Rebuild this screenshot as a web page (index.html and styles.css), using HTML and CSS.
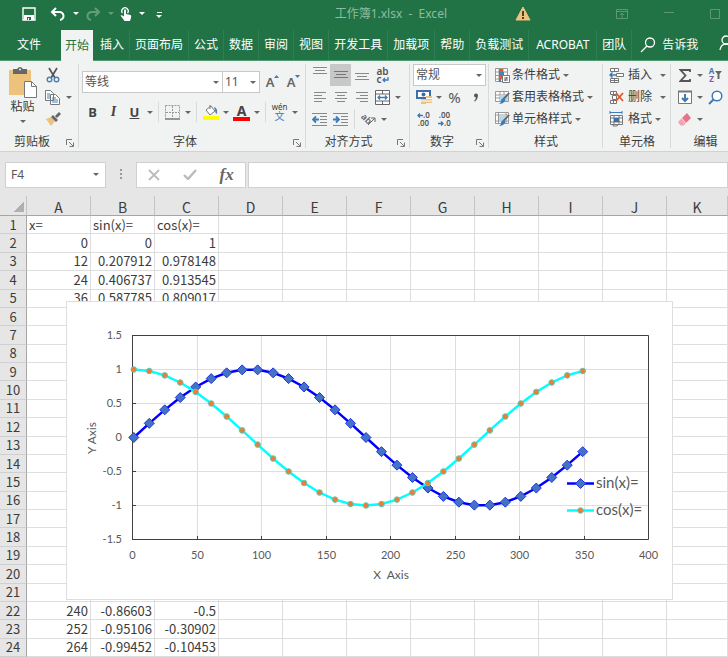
FILE: index.html
```html
<!DOCTYPE html>
<html lang="zh-CN">
<head>
    <meta charset="UTF-8">
    <meta name="viewport" content="width=device-width, initial-scale=1.0">
    <title>工作簿1.xlsx - Excel</title>
    <link rel="stylesheet" href="styles.css">
</head>
<body>
    <header class="titlebar">
        <div class="quick">
            <button class="save" aria-label="保存"><svg width="14" height="14" viewBox="0 0 14 14"><path d="M1 1h12v12H1z" fill="none" stroke="#fff" stroke-width="1.4"/><path d="M2 8h10v5H2z" fill="#fff"/><path d="M5 10h4v3H5z" fill="#217346"/><path d="M6 11h1v2H6z" fill="#fff"/></svg></button>
            <button aria-label="撤消"><svg width="16" height="14" viewBox="0 0 16 14"><path d="M2 5h7a4 4 0 0 1 1 8M6 1L2 5l4 4" fill="none" stroke="#fff" stroke-width="2"/></svg></button>
            <button class="drop" aria-label="撤消列表"><span class="caret"></span></button>
            <button class="faded" aria-label="恢复"><svg width="16" height="14" viewBox="0 0 16 14"><path d="M14 5H7a4 4 0 0 0-1 8M10 1l4 4-4 4" fill="none" stroke="#fff" stroke-width="2"/></svg></button>
            <button class="drop faded" aria-label="恢复列表"><span class="caret"></span></button>
            <button class="touch" aria-label="触摸/鼠标模式"><svg width="12" height="15" viewBox="0 0 12 15"><path d="M2.500 7a3.200 3.200 0 1 1 5 0" fill="none" stroke="#fff" stroke-width="1.300"/><path d="M4 4q1-1.500 2 0v4l4.500 1q1 .5.7 2L10 15H4.500L.5 9.500q1-1 3.500 1z" fill="#fff"/></svg></button>
            <button class="drop" aria-label="模式列表"><span class="caret"></span></button>
            <button class="more" aria-label="自定义快速访问工具栏"><span class="caret"></span></button>
        </div>
        <div class="doc-title">工作簿1.xlsx&nbsp; -&nbsp; Excel</div>
        <svg class="warn" width="16" height="15" viewBox="0 0 16 15"><path d="M8 1l7 13H1z" fill="#f0c27b" stroke="#f0c27b" stroke-linejoin="round"/><path d="M7 5h2v5H7zM7 11h2v2H7z" fill="#4a4030"/></svg>
        <div class="window-buttons">
            <button aria-label="功能区显示选项"><svg width="12" height="10" viewBox="0 0 12 10"><path d="M.5.500h11v9H.5zM.5 2.500h11M6 9V4M4 6l2-2 2 2" fill="none" stroke="#5c9877"/></svg></button>
            <button aria-label="最小化"><svg width="10" height="10" viewBox="0 0 10 10"><path d="M0 3.500h10" stroke="#5c9877"/></svg></button>
            <button aria-label="最大化"><svg width="10" height="10" viewBox="0 0 10 10"><path d="M.5.500h9v9h-9z" fill="none" stroke="#5c9877"/></svg></button>
        </div>
    </header>

    <nav class="tabs">
        <button class="file">文件</button>
        <button class="active">开始</button>
        <button>插入</button>
        <button>页面布局</button>
        <button>公式</button>
        <button>数据</button>
        <button>审阅</button>
        <button>视图</button>
        <button>开发工具</button>
        <button>加载项</button>
        <button>帮助</button>
        <button>负载测试</button>
        <button class="acrobat">ACROBAT</button>
        <button>团队</button>
        <button class="tell-me"><svg width="16" height="16" viewBox="0 0 16 16"><circle cx="10" cy="5.500" r="4.500"/><path d="M7 9l-6 6"/></svg>告诉我</button>
        <button class="share" aria-label="共享"><svg width="14" height="16" viewBox="0 0 14 16"><circle cx="7" cy="5" r="4"/><path d="M1 15q1-6 6-6t6 6"/></svg></button>
    </nav>

    <section class="ribbon">
        <div class="group clipboard">
            <div class="body">
                <button class="paste">
                    <svg width="30" height="32" viewBox="0 0 30 32"><path d="M1 3h22v25H1z" fill="#ecc27c"/><path d="M5 2h4q3-4 6 0h4v5H5z" fill="#666"/><circle cx="12" cy="2.500" r="1" fill="#f1f3f2"/><path d="M16.500 14.500h7l5 5v11h-12z" fill="#fff" stroke="#777"/><path d="M23.500 14.500v5h5" fill="none" stroke="#777"/></svg>
                    粘贴
                    <span class="caret"></span>
                </button>
                <div class="rows">
                    <div class="row"><button class="tool" aria-label="剪切"><svg width="14" height="16" viewBox="0 0 14 16"><path d="M3 1l6 10M11 1L5 11" stroke="#555" stroke-width="1.700"/><circle cx="3.500" cy="12.500" r="2.300" fill="none" stroke="#4a7fb8" stroke-width="1.400"/><circle cx="10.500" cy="12.500" r="2.300" fill="none" stroke="#4a7fb8" stroke-width="1.400"/></svg></button></div>
                    <div class="row"><button class="tool" aria-label="复制"><svg width="15" height="15" viewBox="0 0 15 15"><path d="M.5.500h5l3 3v7h-8zM5.500 4.500h5l4 4v6h-9z" fill="#fff" stroke="#777"/><path d="M2 4h3M2 6h3M2 8h3M7 8h4M7 10h6M7 12h6" stroke="#4a7fb8"/></svg></button><button class="drop" aria-label="复制选项"><span class="caret"></span></button></div>
                    <div class="row"><button class="tool" aria-label="格式刷"><svg width="16" height="14" viewBox="0 0 16 14"><path d="M1 7l5-2 4 4-4 5z" fill="#ecc27c"/><path d="M6 5l2-2 5 5-2 2zM10 4l4-4 2 2-4 4z" fill="#666"/></svg></button></div>
                </div>
            </div>
            <div class="name">剪贴板<svg class="launch" width="8" height="8" viewBox="0 0 8 8"><path d="M.5 6V.500H6M3 3l4 4M7.500 3.500v4h-4" fill="none" stroke="#777"/></svg></div>
        </div>

        <div class="group font">
            <div class="body rows">
                <div class="row">
                    <label class="pick family"><select aria-label="字体"><option>等线</option></select><span class="caret"></span></label>
                    <label class="pick size"><select aria-label="字号"><option>11</option></select><span class="caret"></span></label>
                    <button class="tool grow" aria-label="增大字号">A<svg width="5" height="3" viewBox="0 0 5 3"><path d="M0 3l2.500-3L5 3z" fill="#3d7ab8"/></svg></button>
                    <button class="tool shrink" aria-label="减小字号">A<svg width="5" height="3" viewBox="0 0 5 3"><path d="M0 0l2.500 3L5 0z" fill="#3d7ab8"/></svg></button>
                </div>
                <div class="row">
                    <button class="tool bold">B</button>
                    <button class="tool italic">I</button>
                    <button class="tool underline">U</button>
                    <button class="drop" aria-label="下划线选项"><span class="caret"></span></button>
                    <span class="sep"></span>
                    <button class="tool" aria-label="边框"><svg width="15" height="15" viewBox="0 0 15 15"><path d="M.5.500h14v13M.5.500v13M7.500 1v13M1 7.500h13" fill="none" stroke="#999" stroke-dasharray="2 1"/><path d="M0 14h15" stroke="#777" stroke-width="1.500"/></svg></button>
                    <button class="drop" aria-label="边框选项"><span class="caret"></span></button>
                    <span class="sep"></span>
                    <button class="tool" aria-label="填充颜色"><svg width="16" height="16" viewBox="0 0 16 16"><path d="M3 6l5-4 4 5-5 4z" fill="#fff" stroke="#777"/><path d="M7 5V1" stroke="#777"/><path d="M11 3q4 1 3 7-2-1-2-4z" fill="#4a7fb8"/><path d="M0 12h16v4H0z" fill="#ff0"/></svg></button>
                    <button class="drop" aria-label="填充颜色选项"><span class="caret"></span></button>
                    <button class="tool color">A</button>
                    <button class="drop" aria-label="字体颜色选项"><span class="caret"></span></button>
                    <span class="sep"></span>
                    <button class="tool pinyin"><span>wén</span><span class="han">文</span></button>
                    <button class="drop" aria-label="拼音选项"><span class="caret"></span></button>
                </div>
            </div>
            <div class="name">字体<svg class="launch" width="8" height="8" viewBox="0 0 8 8"><path d="M.5 6V.500H6M3 3l4 4M7.500 3.500v4h-4" fill="none" stroke="#777"/></svg></div>
        </div>

        <div class="group align">
            <div class="body rows">
                <div class="row">
                    <button class="tool" aria-label="顶端对齐"><svg width="14" height="16" viewBox="0 0 14 16"><path d="M0 .500h14M2 3.500h10M0 6.500h14" stroke="#888"/></svg></button>
                    <button class="tool pressed" aria-label="垂直居中"><svg width="14" height="16" viewBox="0 0 14 16"><path d="M0 4.500h14M2 7.500h10M0 10.500h14" stroke="#777"/></svg></button>
                    <button class="tool" aria-label="底端对齐"><svg width="14" height="16" viewBox="0 0 14 16"><path d="M0 6.500h14M2 9.500h10M0 12.500h14" stroke="#888"/></svg></button>
                    <button class="tool wrap"><span>ab</span><span>c<svg width="7" height="6" viewBox="0 0 7 6"><path d="M6 0v3H1M3 1L1 3l2 2" fill="none" stroke="#3d7ab8" stroke-width="1.300"/></svg></span></button>
                </div>
                <div class="row">
                    <button class="tool" aria-label="左对齐"><svg width="12" height="10" viewBox="0 0 12 10"><path d="M0 .500h12M0 3.500h8M0 6.500h12M0 9.500h8" stroke="#888"/></svg></button>
                    <button class="tool" aria-label="居中"><svg width="12" height="10" viewBox="0 0 12 10"><path d="M0 .500h12M2 3.500h8M0 6.500h12M2 9.500h8" stroke="#888"/></svg></button>
                    <button class="tool" aria-label="右对齐"><svg width="12" height="10" viewBox="0 0 12 10"><path d="M0 .500h12M4 3.500h8M0 6.500h12M4 9.500h8" stroke="#888"/></svg></button>
                    <button class="tool" aria-label="合并后居中"><svg width="15" height="15" viewBox="0 0 15 15"><path d="M.5.500h14v14H.5zM.5 4h14M.5 11h14M7.500 0v4M7.500 11v4" fill="#fff" stroke="#666"/><path d="M3 7.500h9M5 5.500l-2 2 2 2M10 5.500l2 2-2 2" fill="none" stroke="#3d7ab8" stroke-width="1.300"/></svg></button>
                    <button class="drop" aria-label="合并选项"><span class="caret"></span></button>
                </div>
                <div class="row">
                    <button class="tool" aria-label="减少缩进量"><svg width="15" height="13" viewBox="0 0 15 13"><path d="M0 .500h15M8 3.500h7M8 6.500h7M8 9.500h7M0 12.500h15" stroke="#888"/><path d="M7 6.500H1M4 3.500l-3 3 3 3" fill="none" stroke="#3d7ab8" stroke-width="1.800"/></svg></button>
                    <button class="tool" aria-label="增加缩进量"><svg width="15" height="13" viewBox="0 0 15 13"><path d="M0 .500h15M8 3.500h7M8 6.500h7M8 9.500h7M0 12.500h15" stroke="#888"/><path d="M0 6.500h6M3 3.500l3 3-3 3" fill="none" stroke="#3d7ab8" stroke-width="1.800"/></svg></button>
                    <span class="sep"></span>
                    <button class="tool orient"><span>ab</span><svg width="8" height="8" viewBox="0 0 8 8"><path d="M0 8l7-7M3 1h4v4" fill="none" stroke="#666"/></svg></button>
                    <button class="drop" aria-label="方向选项"><span class="caret"></span></button>
                </div>
            </div>
            <div class="name">对齐方式<svg class="launch" width="8" height="8" viewBox="0 0 8 8"><path d="M.5 6V.500H6M3 3l4 4M7.500 3.500v4h-4" fill="none" stroke="#777"/></svg></div>
        </div>

        <div class="group number">
            <div class="body rows">
                <div class="row"><label class="pick format"><select aria-label="数字格式"><option>常规</option></select><span class="caret"></span></label></div>
                <div class="row">
                    <button class="tool" aria-label="会计数字格式"><svg width="16" height="16" viewBox="0 0 16 16"><path d="M1 2h13v7H1z" fill="#fff" stroke="#3d6ea8" stroke-width="2"/><circle cx="7.500" cy="5.500" r="2" fill="#3d6ea8"/><path d="M5 10h5v5H5zM10 7h6v7h-6z" fill="#ecc27c"/><path d="M5 12h5M10 9.500h6M10 12h6" stroke="#fff"/></svg></button>
                    <button class="drop" aria-label="货币选项"><span class="caret"></span></button>
                    <button class="tool percent">%</button>
                    <button class="tool" aria-label="千位分隔样式"><svg width="6" height="9" viewBox="0 0 6 9"><path d="M1 2.500a2 2 0 1 1 4 0Q5 6 2 8.500L1 8q2-2 2-3.500-2 0-2-2z" fill="#555"/></svg></button>
                </div>
                <div class="row">
                    <button class="tool decimals"><span><svg width="6" height="5" viewBox="0 0 6 5"><path d="M6 2.500H1M3 .500l-2 2 2 2" fill="none" stroke="#3d7ab8" stroke-width="1.400"/></svg>.0</span><span>.00</span></button>
                    <button class="tool decimals"><span>.00</span><span><svg width="6" height="5" viewBox="0 0 6 5"><path d="M0 2.500h5M3 .500l2 2-2 2" fill="none" stroke="#3d7ab8" stroke-width="1.400"/></svg>.0</span></button>
                </div>
            </div>
            <div class="name">数字<svg class="launch" width="8" height="8" viewBox="0 0 8 8"><path d="M.5 6V.500H6M3 3l4 4M7.500 3.500v4h-4" fill="none" stroke="#777"/></svg></div>
        </div>

        <div class="group styles">
            <div class="body rows">
                <button class="row text"><span class="tool"><svg width="15" height="15" viewBox="0 0 15 15"><path d="M.5.500h12v13H.5zM.5 4h12M.5 7.500h12M.5 11h12M4 .500v13M8 .500v13" fill="#fff" stroke="#999"/><path d="M4 1h4v3H4zM4 8h3v3H4z" fill="#e2562c"/><path d="M4 4h5v4H4zM4 11h2v3H4z" fill="#4a7fb8"/><path d="M7.500 7.500h7v7h-7z" fill="#fff" stroke="#777"/><path d="M9 10h4M9 12h4M12 9l-2 4" stroke="#666"/></svg></span>条件格式<span class="caret"></span></button>
                <button class="row text"><span class="tool"><svg width="15" height="15" viewBox="0 0 15 15"><path d="M.5 1.500h13v10H.5zM.5 5h13M.5 8h13M5 1v10M9 1v10" fill="#fff" stroke="#999"/><path d="M5 5h8v6H5z" fill="#b9d7e6"/><path d="M15 3l-5 6-2-1 5-5z" fill="#666"/><path d="M8 8q3 0 2 3-2 3-6 3 2-1 2-3 0-2 2-3z" fill="#3d7ab8"/></svg></span>套用表格格式<span class="caret"></span></button>
                <button class="row text"><span class="tool"><svg width="15" height="15" viewBox="0 0 15 15"><path d="M.5.500h13v11H.5zM.5 3h13M.5 9h13M3.500 0v11M11 0v11" fill="#fff" stroke="#999"/><path d="M4 3h7v6H4z" fill="#b9d7e6"/><path d="M15 3l-5 6-2-1 5-5z" fill="#666"/><path d="M8 8q3 0 2 3-2 3-6 3 2-1 2-3 0-2 2-3z" fill="#3d7ab8"/></svg></span>单元格样式<span class="caret"></span></button>
            </div>
            <div class="name">样式</div>
        </div>

        <div class="group cells">
            <div class="body rows">
                <button class="row text"><span class="tool"><svg width="15" height="15" viewBox="0 0 15 15"><path d="M1.500.500h8v3h-8zM5.500.500v3M1.500 10.500h8v4h-8zM1.500 12.500h8M5.500 10.500v4M7.500 5.500h7v3h-7z" fill="#fff" stroke="#777"/><path d="M7 7H1M3.500 4.500L1 7l2.500 2.500" fill="none" stroke="#3d7ab8" stroke-width="1.500"/></svg></span>插入<span class="caret"></span></button>
                <button class="row text"><span class="tool"><svg width="15" height="15" viewBox="0 0 15 15"><path d="M1.500 1.500h6v3h-6zM4.500 1.500v3M1.500 10.500h6v3h-6zM4.500 10.500v3M3.500 5.500h4v4h-4z" fill="#fff" stroke="#777"/><path d="M7 3l7 8M14 3l-7 8" stroke="#e2562c" stroke-width="1.800"/></svg></span>删除<span class="caret"></span></button>
                <button class="row text tight"><span class="tool"><svg width="15" height="16" viewBox="0 0 15 16"><path d="M1 1.500h12M1 0v3M13 0v3" stroke="#3d7ab8"/><path d="M1.500 4.500h12v9h-12zM1.500 7h12M1.500 11h12M5 4.500v9M10 4.500v9" fill="#fff" stroke="#777"/><path d="M5 7h5v4H5z" fill="#3d6ea8"/><path d="M4 13v2h4l2-2" fill="none" stroke="#777"/></svg></span>格式<span class="caret"></span></button>
            </div>
            <div class="name">单元格</div>
        </div>

        <div class="group editing">
            <div class="body rows">
                <div class="row">
                    <button class="tool" aria-label="自动求和"><svg width="12" height="13" viewBox="0 0 12 13"><path d="M11 3V1H1.500l5 5.500-5 5.500H11v-2" fill="none" stroke="#555" stroke-width="1.800"/></svg></button>
                    <button class="drop" aria-label="求和选项"><span class="caret"></span></button>
                    <button class="tool sort"><span class="az"><span>A</span><span class="z">Z</span></span><svg width="7" height="8" viewBox="0 0 7 8"><path d="M0 0h7L4.500 3v5h-2V3z" fill="#666"/></svg></button>
                </div>
                <div class="row">
                    <button class="tool" aria-label="填充"><svg width="14" height="14" viewBox="0 0 14 14"><path d="M.5 1.500h13v12H.5z" fill="#fff" stroke="#777"/><path d="M0 1.500h14" stroke="#777" stroke-width="2"/><path d="M7 4v7M4 8l3 3 3-3" fill="none" stroke="#3d7ab8" stroke-width="2"/></svg></button>
                    <button class="drop" aria-label="填充选项"><span class="caret"></span></button>
                    <button class="tool" aria-label="查找和选择"><svg width="15" height="15" viewBox="0 0 15 15"><circle cx="9" cy="6" r="4.800" fill="#fff" stroke="#3d7ab8" stroke-width="1.500"/><path d="M5.500 9.500L1 14" stroke="#3d7ab8" stroke-width="2"/></svg></button>
                </div>
                <div class="row">
                    <button class="tool" aria-label="清除"><svg width="13" height="13" viewBox="0 0 13 13"><path d="M4 5l5-5 4 5-5 5z" fill="#e8748a"/><path d="M3.500 5.500l4 5-2 2H2.500L0 9z" fill="#f0a3b2"/></svg></button>
                    <button class="drop" aria-label="清除选项"><span class="caret"></span></button>
                </div>
            </div>
            <div class="name">编辑</div>
        </div>
    </section>

    <section class="formula-bar">
        <label class="name-box"><input type="text" value="F4" aria-label="名称框"><span class="caret"></span></label>
        <span class="dots"></span>
        <div class="entry">
            <button aria-label="取消"><svg width="12" height="12" viewBox="0 0 12 12"><path d="M1 1l10 10M11 1L1 11" stroke="#bbb" stroke-width="1.800"/></svg></button>
            <button aria-label="输入"><svg width="14" height="11" viewBox="0 0 14 11"><path d="M1 6l4 4 8-9" fill="none" stroke="#bbb" stroke-width="2.400"/></svg></button>
            <button class="fx">fx</button>
        </div>
        <input class="formula" type="text" aria-label="编辑栏">
    </section>

    <main class="sheet">
        <table>
            <thead>
                <tr><th class="corner"></th><th>A</th><th>B</th><th>C</th><th>D</th><th>E</th><th>F</th><th>G</th><th>H</th><th>I</th><th>J</th><th class="last">K</th></tr>
            </thead>
            <tbody id="rows"></tbody>
        </table>
        <div class="chart">
            <svg id="plot" width="605" height="297" viewBox="67 302 605 297"></svg>
        </div>
    </main>
    <script src="sheet.js"></script>
</body>
</html>
```
FILE: styles.css
```css
* {
    box-sizing: border-box;
}
body {
    margin: 0;
    height: 100vh;
    display: flex;
    flex-direction: column;
    overflow: hidden;
    background: #e6e6e6;
    color: #3c3c3c;
    font: 12px/16px "Noto Sans", "Noto Sans CJK SC", sans-serif;
}
button, input, select {
    margin: 0;
    padding: 0;
    border: none;
    background: none;
    color: inherit;
    font: inherit;
}
svg {
    flex: none;
}
.caret {
    flex: none;
    border: 3px solid transparent;
    border-top-color: #666;
    border-bottom: none;
}

/* Title bar */
.titlebar {
    flex: none;
    height: 27px;
    display: flex;
    align-items: center;
    background: #217346;
    color: #8fbca1;
}
.quick {
    display: flex;
    align-items: center;
    padding-left: 21px;
}
.quick button {
    display: flex;
    justify-content: center;
    width: 16px;
}
.quick .save {
    margin-right: 13px;
}
.quick .drop {
    width: 19px;
}
.quick .touch {
    width: 12px;
}
.quick .caret {
    border-top-color: #fff;
}
.quick .faded {
    opacity: 0.3;
}
.quick .more {
    padding-top: 2px;
    flex-direction: column;
    align-items: center;
}
.quick .more::before {
    content: "";
    width: 5px;
    height: 1px;
    margin-bottom: 2px;
    background: #fff;
}
.doc-title {
    flex: 1;
    padding-right: 68px;
    text-align: right;
    white-space: nowrap;
}
.window-buttons {
    display: flex;
    gap: 36px;
    padding: 0 8px 0 85px;
}
.window-buttons button {
    display: flex;
}

/* Ribbon tabs */
.tabs {
    flex: none;
    height: 34px;
    display: flex;
    padding-top: 3px;
    border-bottom: 1px solid #4f9a70;
    background: #217346;
    color: #fff;
}
.tabs button {
    flex: none;
    padding: 0 5px;
    border-right: 1px solid #2f7d53;
    white-space: nowrap;
}
.tabs .file {
    padding: 0 20px 0 17px;
    border: none;
}
.tabs .active {
    padding: 0 4px;
    margin: 0 2px -1px 0;
    border: none;
    background: #f1f3f2;
    color: #217346;
}
.tabs .acrobat {
    padding: 0 7px;
}
.tabs .tell-me {
    display: flex;
    align-items: center;
    gap: 6px;
    padding-left: 8px;
    border: none;
}
.tabs .share {
    padding-left: 16px;
    border: none;
}
.tabs svg {
    fill: none;
    stroke: #fff;
    stroke-width: 1.3;
}

/* Ribbon */
.ribbon {
    flex: none;
    height: 91px;
    display: flex;
    padding-top: 3px;
    border-bottom: 1px solid #d2d2d2;
    background: #f1f3f2;
}
.group {
    flex: none;
    display: flex;
    flex-direction: column;
    padding-left: 3px;
    position: relative;
}
.group::after {
    content: "";
    position: absolute;
    top: 0;
    right: 0;
    bottom: 3px;
    width: 1px;
    background: #d8dad9;
}
.clipboard { width: 79px; }
.font { width: 227px; }
.align { width: 104px; }
.number { width: 79px; }
.styles { width: 114px; }
.cells { width: 68px; }
.editing { flex: 1 0 76px; }
.body {
    flex: 1;
}
.rows {
    display: flex;
    flex-direction: column;
}
.row {
    display: flex;
    align-items: center;
    height: 22px;
}
.font .body {
    padding-top: 3px;
}
.font .row {
    height: 30px;
}
.name {
    height: 19px;
    line-height: 20px;
    margin-right: 18px;
    text-align: center;
}
.align .name {
    margin-right: 22px;
}
.styles .name, .cells .name {
    margin-right: 3px;
}
.editing .name {
    margin-right: 10px;
}
.launch {
    position: absolute;
    right: 5px;
    bottom: 4px;
}
.tool {
    flex: none;
    width: 21px;
    height: 22px;
    display: flex;
    align-items: center;
    justify-content: center;
}
.drop {
    flex: none;
    width: 10px;
    height: 22px;
    display: flex;
    align-items: center;
    justify-content: center;
}
.sep {
    width: 1px;
    height: 20px;
    margin: 0 3px;
    background: #d8dad9;
}
.pressed {
    background: #c8c8c8;
}
.clipboard .body {
    display: flex;
}
.paste {
    width: 39px;
    display: flex;
    flex-direction: column;
    align-items: center;
    padding-top: 3px;
}
.paste .caret {
    margin-top: 5px;
}
.clipboard .drop {
    width: 12px;
}
.pick {
    display: flex;
    align-items: center;
    height: 22px;
    border: 1px solid #c8c8c8;
    background: #fff;
    padding-right: 3px;
    color: #555;
}
.pick select {
    flex: 1;
    min-width: 0;
    padding-left: 2px;
    appearance: none;
    outline: none;
}
.family { width: 141px; }
.size { width: 37px; border-left: none; }
.format { width: 73px; }
.font .grow {
    margin-left: 2px;
}
.grow, .shrink {
    font-size: 13px;
    font-weight: 600;
    color: #666;
}
.grow svg, .shrink svg {
    margin-bottom: 12px;
}
.bold, .underline, .color {
    font-size: 13px;
    font-weight: bold;
    color: #444;
}
.italic {
    font: italic bold 14px "Liberation Serif", serif;
    color: #444;
}
.underline {
    text-decoration: underline;
}
.color {
    width: 17px;
    height: 17px;
    margin: 0 2px;
    border-bottom: 4px solid #f00;
    font-size: 14px;
    line-height: 13px;
}
.pinyin, .wrap {
    flex-direction: column;
    font-size: 8px;
    line-height: 8px;
}
.pinyin .han {
    font-size: 10px;
    line-height: 10px;
    color: #3d7ab8;
}
.wrap {
    font-size: 10px;
    font-weight: 600;
    color: #555;
}
.orient {
    font-size: 9px;
    font-weight: 600;
    color: #666;
}
.orient span {
    transform: rotate(45deg);
}
.orient svg {
    margin: 4px 0 0 -3px;
}
.percent {
    font-size: 15px;
    color: #555;
}
.decimals {
    flex-direction: column;
    align-items: center;
    font-size: 8px;
    font-weight: 600;
    line-height: 8px;
    color: #555;
}
.text {
    width: 100%;
    white-space: nowrap;
}
.text .caret {
    margin-left: 3px;
}
.styles .tool {
    margin-right: -1px;
}
.cells .tool {
    margin-right: 1px;
}
.cells .caret {
    margin-left: 8px;
}
.cells .tight .caret {
    margin-left: 3px;
}
.sort {
    gap: 1px;
}
.az {
    display: flex;
    flex-direction: column;
    font-size: 8px;
    font-weight: bold;
    line-height: 8px;
    color: #3d7ab8;
}
.az .z {
    color: #8a5aa8;
}

/* Formula bar */
.formula-bar {
    flex: none;
    height: 44px;
    display: flex;
    align-items: center;
    padding: 1px 0 0 5px;
}
.name-box, .entry, .formula {
    display: flex;
    align-items: center;
    height: 26px;
    border: 1px solid #d0d0d0;
    background: #fff;
}
.name-box {
    width: 101px;
    padding-right: 6px;
}
.name-box input {
    flex: 1;
    min-width: 0;
    padding-left: 5px;
    color: #555;
}
.dots {
    width: 2px;
    height: 11px;
    margin: 0 14px;
    background: repeating-linear-gradient(#999 0 2px, transparent 2px 4px);
}
.entry {
    width: 110px;
    justify-content: space-around;
}
.entry button {
    display: flex;
}
.entry .fx {
    font: italic bold 17px/20px "Liberation Serif", serif;
    color: #666;
}
.formula {
    flex: 1;
    min-width: 0;
    margin-left: 2px;
}

/* Worksheet */
.sheet {
    flex: 1;
    min-height: 0;
    position: relative;
}
table {
    width: 100%;
    height: 100%;
    table-layout: fixed;
    border-spacing: 0;
    background: #fff;
    font: 13px/16px "Noto Sans CJK SC", sans-serif;
}
th, td {
    width: 64px;
    padding: 0 2px;
    border-right: 1px solid #dedede;
    border-bottom: 1px solid #dedede;
    white-space: nowrap;
}
th {
    font-weight: normal;
    background: #e6e6e6;
}
thead th {
    height: 20px;
    padding-top: 2px;
    border-right-color: #c4c4c4;
    border-bottom-color: #a6a6a6;
    font-size: 14px;
}
tbody th {
    border-right-color: #a6a6a6;
    border-bottom-color: #d0d0d0;
}
thead .corner {
    width: 27px;
    background: linear-gradient(135deg, transparent 50%, #b0b0b0 50%) 13px 5px / 11px 11px no-repeat #e6e6e6;
}
thead .last {
    width: auto;
}
td {
    text-align: right;
}
td.label {
    text-align: left;
}

/* Floating chart object */
.chart {
    position: absolute;
    left: 66px;
    top: 105px;
    border: 1px solid #dedede;
    background: #fff;
}
.chart svg {
    display: block;
    font-family: Lato, sans-serif;
    fill: #595959;
}
.grid {
    stroke: #dedede;
}
.frame {
    fill: none;
    stroke: #404040;
}
.tick-label {
    font-size: 11px;
}
.axis-title {
    font-size: 12px;
    white-space: pre;
}
.legend {
    font-size: 15px;
}
.line {
    fill: none;
    stroke-width: 2.5;
}
.sin { stroke: #0000ff; }
.cos { stroke: #00ffff; }
.sin-mark {
    fill: #4472c4;
    stroke: #1f35e0;
}
.cos-mark {
    fill: #ed7d31;
    stroke: #5fc9b8;
}
```
FILE: sheet.js
```js
const ROW_COUNT = 24;
// rows that lie completely behind the chart get no values
const HIDDEN_FROM = 6;
const HIDDEN_TO = 21;

const points = [];
for (let x = 0; x <= 348; x += 12) {
    const rad = x * Math.PI / 180;
    points.push({ x: x, sin: Math.sin(rad), cos: Math.cos(rad) });
}

// general number format: as many decimals as the column can hold
function general(v) {
    return String(Number(v.toFixed(v < 0 ? 5 : 6)));
}

let html = "<tr><th>1</th><td class='label'>x=</td><td class='label'>sin(x)=</td><td class='label'>cos(x)=</td>" + "<td></td>".repeat(8) + "</tr>";
for (let r = 2; r <= ROW_COUNT; r++) {
    const p = points[r - 2];
    if (r >= HIDDEN_FROM && r <= HIDDEN_TO) {
        html += `<tr><th>${r}</th>` + "<td></td>".repeat(11) + "</tr>";
    } else {
        html += `<tr><th>${r}</th><td>${p.x}</td><td>${general(p.sin)}</td><td>${general(p.cos)}</td>` + "<td></td>".repeat(8) + "</tr>";
    }
}
document.getElementById("rows").innerHTML = html;

// chart scales
const left = 132, right = 648, top_ = 335, bottom = 539;
const sx = v => left + 0.5 + v * (right - left) / 400;
const sy = v => (top_ + bottom) / 2 + 0.5 - v * (bottom - top_) / 3;

function diamond(x, y) {
    return `<path class="sin-mark" d="M${x} ${y - 5}l5 5-5 5-5-5z"/>`;
}
function dot(x, y) {
    return `<circle class="cos-mark" cx="${x}" cy="${y}" r="2.800"/>`;
}

let g = "";
let ticks = "";
for (let v = 0; v <= 400; v += 50) {
    const x = Math.floor(sx(v)) + 0.5;
    g += `<path class="grid" d="M${x} ${top_}V${bottom}"/>`;
    ticks += `M${x} ${bottom}v-3`;
    g += `<text class="tick-label" x="${x}" y="559" text-anchor="middle">${v}</text>`;
}
for (let v = -1.5; v <= 1.5; v += 0.5) {
    const y = sy(v);
    g += `<path class="grid" d="M${left} ${y}H${right}"/>`;
    ticks += `M${left} ${y}h4`;
    g += `<text class="tick-label" x="122" y="${y + 3}" text-anchor="end">${v}</text>`;
}
g += `<path class="frame" d="M${left + 0.5} ${top_ + 0.5}H${right + 0.5}V${bottom + 0.5}H${left + 0.5}z${ticks}"/>`;
["sin", "cos"].forEach(name => {
    const mark = name === "sin" ? diamond : dot;
    g += `<polyline class="line ${name}" points="${points.map(p => sx(p.x + 1) + "," + sy(p[name])).join(" ")}"/>`;
    g += points.map(p => mark(sx(p.x + 1), sy(p[name]))).join("");
});
g += `<path class="line sin" d="M567 483.500h27"/>` + diamond(580.5, 483.5) + `<text class="legend" x="596" y="488">sin(x)=</text>`;
g += `<path class="line cos" d="M567 510.500h27"/>` + dot(580.5, 510.5) + `<text class="legend" x="596" y="515">cos(x)=</text>`;
g += `<text class="axis-title" x="391" y="579" text-anchor="middle">X  Axis</text>`;
g += `<text class="axis-title" x="96" y="438" text-anchor="middle" transform="rotate(-90 96 438)">Y Axis</text>`;
document.getElementById("plot").innerHTML = g;
```
